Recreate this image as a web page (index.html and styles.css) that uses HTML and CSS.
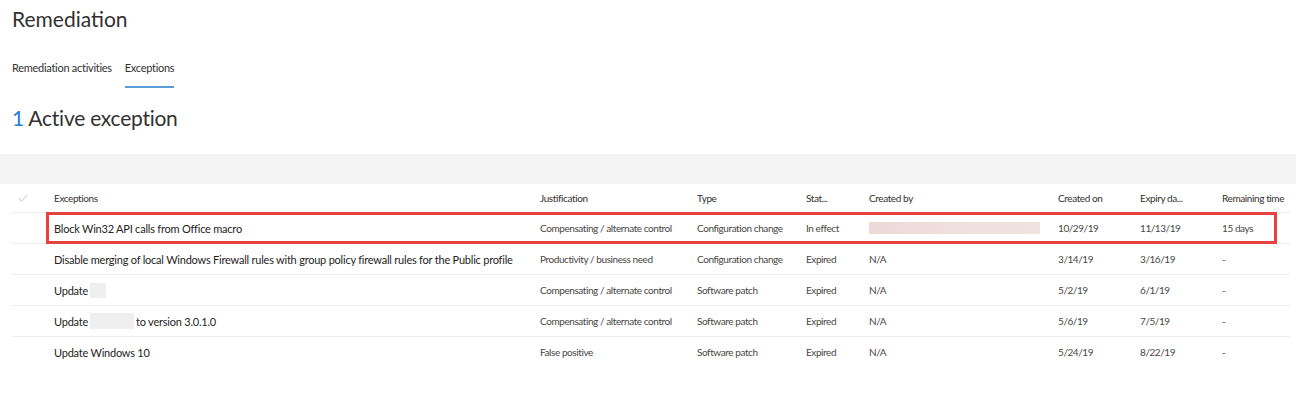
FILE: index.html
```html
<!DOCTYPE html>
<html>
<head>
<meta charset="utf-8">
<link rel="stylesheet" href="styles.css">
</head>
<body>
<div class="page">
  <h1 class="title">Remediation</h1>
  <nav class="tabs">
    <span class="tab">Remediation activities</span>
    <span class="tab active">Exceptions</span>
  </nav>
  <h2 class="count"><span class="num">1</span> Active exception</h2>
</div>
<div class="toolbar"></div>
<div class="table">
  <div class="row head">
    <div class="c check"><svg width="10" height="8" viewBox="0 0 10 8"><path d="M0.5 4.2 L3.5 7 L9.5 0.8" fill="none" stroke="#b8b8b8" stroke-width="0.9"/></svg></div>
    <div class="c name">Exceptions</div>
    <div class="c">Justification</div>
    <div class="c">Type</div>
    <div class="c">Stat...</div>
    <div class="c">Created by</div>
    <div class="c">Created on</div>
    <div class="c">Expiry da...</div>
    <div class="c">Remaining time</div>
  </div>
  <div class="row sel">
    <div class="c check"></div>
    <div class="c name">Block Win32 API calls from Office macro</div>
    <div class="c">Compensating / alternate control</div>
    <div class="c">Configuration change</div>
    <div class="c">In effect</div>
    <div class="c"><span class="blur-user"></span></div>
    <div class="c">10/29/19</div>
    <div class="c">11/13/19</div>
    <div class="c">15 days</div>
  </div>
  <div class="row">
    <div class="c check"></div>
    <div class="c name">Disable merging of local Windows Firewall rules with group policy firewall rules for the Public profile</div>
    <div class="c">Productivity / business need</div>
    <div class="c">Configuration change</div>
    <div class="c">Expired</div>
    <div class="c">N/A</div>
    <div class="c">3/14/19</div>
    <div class="c">3/16/19</div>
    <div class="c">-</div>
  </div>
  <div class="row">
    <div class="c check"></div>
    <div class="c name">Update <span class="blur small"></span></div>
    <div class="c">Compensating / alternate control</div>
    <div class="c">Software patch</div>
    <div class="c">Expired</div>
    <div class="c">N/A</div>
    <div class="c">5/2/19</div>
    <div class="c">6/1/19</div>
    <div class="c">-</div>
  </div>
  <div class="row">
    <div class="c check"></div>
    <div class="c name">Update <span class="blur wide"></span> to version 3.0.1.0</div>
    <div class="c">Compensating / alternate control</div>
    <div class="c">Software patch</div>
    <div class="c">Expired</div>
    <div class="c">N/A</div>
    <div class="c">5/6/19</div>
    <div class="c">7/5/19</div>
    <div class="c">-</div>
  </div>
  <div class="row last">
    <div class="c check"></div>
    <div class="c name">Update Windows 10</div>
    <div class="c">False positive</div>
    <div class="c">Software patch</div>
    <div class="c">Expired</div>
    <div class="c">N/A</div>
    <div class="c">5/24/19</div>
    <div class="c">8/22/19</div>
    <div class="c">-</div>
  </div>
</div>
</body>
</html>
```
FILE: styles.css
```css
* { box-sizing: border-box; }
body {
  margin: 0;
  background: #fff;
  font-family: Lato, "Open Sans", sans-serif;
  color: #323130;
  width: 1296px;
  height: 401px;
  overflow: hidden;
}
.page { padding: 0 12px; }
.title {
  margin: 0;
  padding-top: 5px;
  font-size: 21px;
  font-weight: 400;
  line-height: 28px;
}
.tabs {
  display: flex;
  gap: 13px;
  margin-top: 27px;
  height: 22px;
}
.tab {
  font-size: 11px;
  line-height: 16px;
  letter-spacing: -0.28px;
  color: #323130;
  position: relative;
}
.tab.active::after {
  content: "";
  position: absolute;
  left: 0;
  right: 0;
  bottom: -6px;
  height: 2px;
  background: #5b9bd9;
}
.count {
  margin: 22px 0 0;
  font-size: 21px;
  font-weight: 400;
  line-height: 28px;
  letter-spacing: -0.25px;
}
.num { color: #1e7fd6; }
.toolbar {
  margin-top: 22px;
  height: 30px;
  background: #f4f4f4;
}
.table { padding: 0 6px 0 12px; }
.row {
  display: grid;
  grid-template-columns: 34px 486px 157px 109px 63px 189px 82px 82px 76px;
  height: 31px;
  align-items: center;
  border-bottom: 1px solid #ededed;
  font-size: 10px;
  letter-spacing: -0.42px;
  color: #484644;
  position: relative;
}
.row.head { height: 29px; color: #323130; letter-spacing: -0.4px; }
.row.last { border-bottom: none; height: 30px; }
.c { padding-left: 8px; white-space: nowrap; overflow: hidden; }
.c.check { padding-left: 6px; display: flex; align-items: center; }
.c.name { font-size: 11px; letter-spacing: -0.22px; color: #252423; display: flex; align-items: center; gap: 2px; }
.row.head .c.name { font-size: 10px; color: #323130; letter-spacing: -0.4px; }
.row.sel::after {
  content: "";
  position: absolute;
  left: 34px;
  right: 13px;
  top: -1px;
  bottom: -1px;
  border: 3px solid #e8423f;
  pointer-events: none;
}
.blur-user {
  display: block;
  width: 171px;
  height: 12px;
  background: linear-gradient(90deg, #eed8d8, #efdfdf 50%, #f1e2e2);
}
.blur { display: inline-block; background: #efefef; }
.blur.small { width: 16px; height: 15px; }
.blur.wide { width: 44px; height: 16px; }
```
